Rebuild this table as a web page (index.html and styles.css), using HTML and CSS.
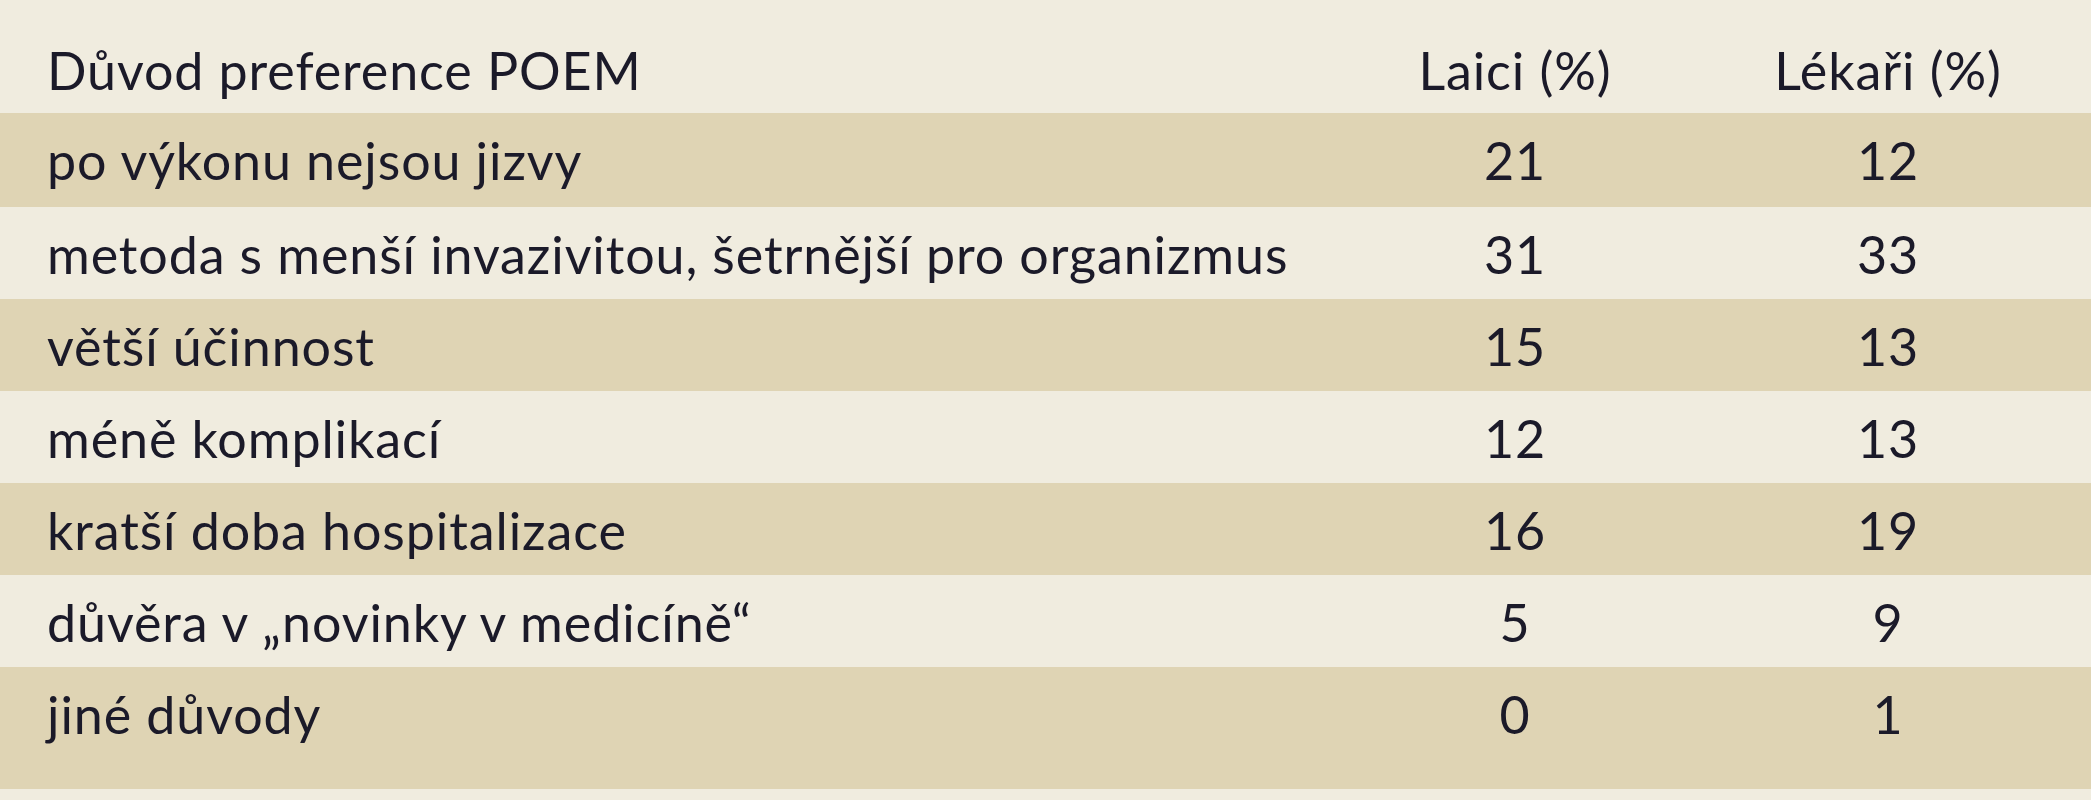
FILE: index.html
```html
<!DOCTYPE html>
<html lang="cs">
<head>
<meta charset="utf-8">
<title>Důvod preference POEM</title>
<link rel="stylesheet" href="styles.css">
</head>
<body>
<div class="table">
  <div class="row head">
    <div class="c1">Důvod preference POEM</div>
    <div class="c2">Laici (%)</div>
    <div class="c3">Lékaři (%)</div>
  </div>
  <div class="row dark first">
    <div class="c1">po výkonu nejsou jizvy</div>
    <div class="c2">21</div>
    <div class="c3">12</div>
  </div>
  <div class="row">
    <div class="c1">metoda s menší invazivitou, šetrnější pro organizmus</div>
    <div class="c2">31</div>
    <div class="c3">33</div>
  </div>
  <div class="row dark">
    <div class="c1">větší účinnost</div>
    <div class="c2">15</div>
    <div class="c3">13</div>
  </div>
  <div class="row">
    <div class="c1">méně komplikací</div>
    <div class="c2">12</div>
    <div class="c3">13</div>
  </div>
  <div class="row dark">
    <div class="c1">kratší doba hospitalizace</div>
    <div class="c2">16</div>
    <div class="c3">19</div>
  </div>
  <div class="row">
    <div class="c1">důvěra v „novinky v medicíně“</div>
    <div class="c2">5</div>
    <div class="c3">9</div>
  </div>
  <div class="row dark last">
    <div class="c1">jiné důvody</div>
    <div class="c2">0</div>
    <div class="c3">1</div>
  </div>
</div>
</body>
</html>
```

FILE: styles.css
```css
html, body {
  margin: 0;
  padding: 0;
  background: #f0ecdf;
}
body {
  width: 2091px;
  height: 800px;
  overflow: hidden;
  font-family: "Lato", "Liberation Sans", sans-serif;
  font-size: 52px;
  letter-spacing: 0.9px;
  color: #1b1a29;
}
.table {
  display: flex;
  flex-direction: column;
}
.row {
  display: grid;
  grid-template-columns: 1345px 340px 1fr;
  height: 92px;
  line-height: 52px;
  padding-top: 21px;
  box-sizing: border-box;
  white-space: nowrap;
}
.row.head {
  height: 113px;
  padding-top: 44px;
}
.row.first { height: 94px; }
.row.last { height: 122px; }
.dark {
  background: #dfd4b4;
}
.c1 { padding-left: 47px; }
.c2, .c3 { text-align: center; }
```
